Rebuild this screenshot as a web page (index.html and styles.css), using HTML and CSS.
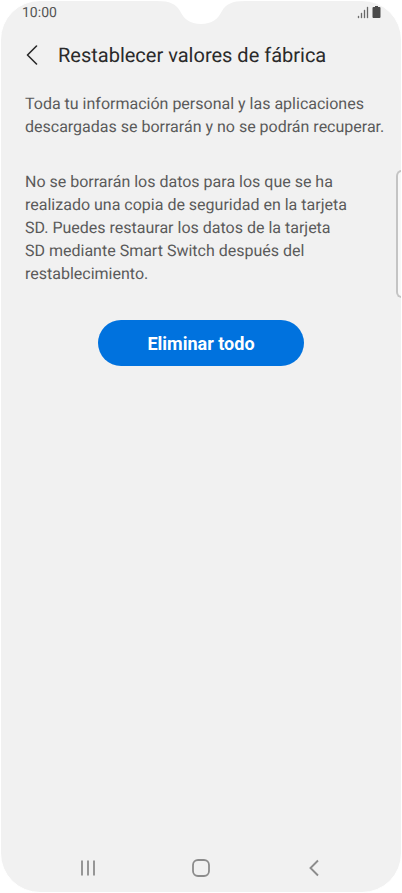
FILE: index.html
```html
<!DOCTYPE html>
<html lang="es">
<head>
<meta charset="utf-8">
<meta name="viewport" content="width=device-width, initial-scale=1">
<title>Restablecer valores de fábrica</title>
<link rel="stylesheet" href="styles.css">
</head>
<body>
<div class="screen">
  <svg class="notch" viewBox="0 0 100 25" aria-hidden="true"><path d="M6 0V1C19 1 25 4 29 11C33 19 39 24 50 24C61 24 67 19 71 11C75 4 81 1 94 1V0Z" fill="#fff"/></svg>
  <div class="status">
    <span>10:00</span>
    <svg class="status-icons" viewBox="0 0 24 14" aria-hidden="true">
      <path d="M1 10h1v2H1zM4 7h1v5H4zM7 4h1v8H7zM10 1h1v11h-1z" fill="#555" stroke="#888" stroke-width=".4"/>
      <path d="M18 0h3v1h1.500q1 0 1 1v9q0 1-1 1h-6q-1 0-1-1V2q0-1 1-1H18z" fill="#4a4a4a"/>
    </svg>
  </div>
  <header class="header">
    <button class="back" type="button" aria-label="Atrás">
      <svg viewBox="0 0 12 20" aria-hidden="true"><path d="M10.500 1L1.500 10l9 9" fill="none" stroke="#2a2a2a" stroke-width="1.600" stroke-linecap="round" stroke-linejoin="round"/></svg>
    </button>
    <h1>Restablecer valores de fábrica</h1>
  </header>
  <main class="content">
    <p>Toda tu información personal y las aplicaciones<br>descargadas se borrarán y no se podrán recuperar.</p>
    <p>No se borrarán los datos para los que se ha<br>realizado una copia de seguridad en la tarjeta<br>SD. Puedes restaurar los datos de la tarjeta<br>SD mediante Smart Switch después del<br>restablecimiento.</p>
    <button class="primary" type="button">Eliminar todo</button>
  </main>
  <nav class="nav" aria-label="Navegación">
    <button type="button" aria-label="Recientes"><svg viewBox="0 0 20 20" aria-hidden="true"><path d="M4 2.500v15M10 2.500v15M16 2.500v15" stroke="#8c8c8c" stroke-width="1.800"/></svg></button>
    <button type="button" aria-label="Inicio"><svg viewBox="0 0 20 20" aria-hidden="true"><rect x="2" y="2" width="16" height="16" rx="5" fill="none" stroke="#8c8c8c" stroke-width="1.800"/></svg></button>
    <button type="button" aria-label="Volver"><svg viewBox="0 0 20 20" aria-hidden="true"><path d="M14 2.500L6.500 10l7.500 7.500" fill="none" stroke="#8c8c8c" stroke-width="1.900"/></svg></button>
  </nav>
  <div class="edge-handle"></div>
</div>
</body>
</html>
```
FILE: styles.css
```css
* {
  box-sizing: border-box;
}

body {
  margin: 0;
  background: #fff;
  font-family: Roboto, "Liberation Sans", sans-serif;
  text-rendering: geometricPrecision;
}

button {
  border: 0;
  padding: 0;
  background: none;
  font: inherit;
}

svg {
  display: block;
}

.screen {
  position: relative;
  display: flex;
  flex-direction: column;
  min-height: 100vh;
  overflow: hidden;
  background: #f1f1f1;
  border: 1px solid #fff;
  border-radius: 40px;
}

.notch {
  position: absolute;
  top: -1px;
  left: 50%;
  width: 100px;
  transform: translateX(-50%);
}

.status {
  display: flex;
  justify-content: space-between;
  align-items: center;
  height: 24px;
  padding: 0 20px 0 21px;
  color: #555;
  font-size: 14px;
}

.status-icons {
  width: 24px;
  height: 14px;
}

.header {
  display: flex;
  align-items: center;
  gap: 20px;
  height: 60px;
  padding: 0 25px;
}

.back svg {
  width: 12px;
  height: 20px;
}

h1 {
  margin: 0;
  color: #2a2a2a;
  font-size: 20px;
  font-weight: 400;
  line-height: 24px;
}

.content {
  flex: 1;
  display: flex;
  flex-direction: column;
  padding: 7px 16px 0;
}

p {
  margin: 0 0 32px;
  padding-left: 8px;
  color: #5a5a5a;
  font-size: 16px;
  line-height: 23px;
}

.primary {
  align-self: center;
  width: 56%;
  min-width: 206px;
  min-height: 46px;
  margin-top: 3px;
  border-radius: 23px;
  background: #0072de;
  color: #fff;
  font-size: 18px;
  font-weight: 700;
}

.nav {
  display: flex;
  justify-content: center;
  gap: 93px;
  padding-bottom: 14px;
}

.nav svg {
  width: 20px;
  height: 20px;
}

.edge-handle {
  position: absolute;
  top: 169px;
  right: -1px;
  width: 6px;
  height: 128px;
  border: 2px solid #c4c4c4;
  border-right: 0;
  border-radius: 6px 0 0 6px;
  background: #f8f8f8;
}
```
